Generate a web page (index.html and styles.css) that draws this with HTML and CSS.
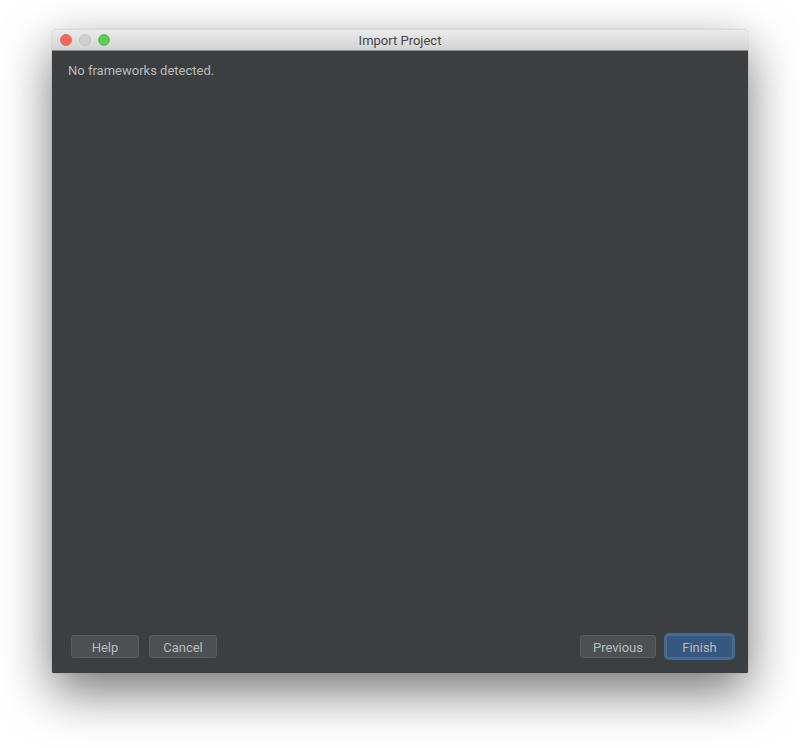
FILE: index.html
```html
<!DOCTYPE html>
<html lang="en">
<head>
<meta charset="utf-8">
<title>Import Project</title>
<link rel="stylesheet" href="styles.css">
</head>
<body>
<main class="window">
  <header class="titlebar">
    <div class="controls">
      <button class="light close" type="button" aria-label="Close"></button>
      <button class="light minimize" type="button" aria-label="Minimize" disabled></button>
      <button class="light expand" type="button" aria-label="Zoom"></button>
    </div>
    <h1 class="title">Import Project</h1>
  </header>
  <section class="content">
    <p class="message">No frameworks detected.</p>
  </section>
  <footer class="actions">
    <button class="button" type="button">Help</button>
    <button class="button" type="button">Cancel</button>
    <span class="spacer"></span>
    <button class="button previous" type="button">Previous</button>
    <button class="button primary" type="button">Finish</button>
  </footer>
</main>
</body>
</html>
```
FILE: styles.css
```css
* {
  box-sizing: border-box;
}

body {
  display: flex;
  min-height: 100vh;
  margin: 0;
  padding: 29px 52px 75px;
  background: #fff;
  font-family: Roboto, "Liberation Sans", sans-serif;
  font-size: 13px;
  line-height: 16px;
}

.window {
  display: flex;
  flex: 1;
  flex-direction: column;
  overflow: hidden;
  border-radius: 5px 5px 1px 1px;
  background: linear-gradient(#ebebeb 20px, #3c3f41 20px);
  box-shadow: 0 0 1px rgba(0, 0, 0, 0.3), 0 19px 50px rgba(0, 0, 0, 0.54);
}

.titlebar {
  display: grid;
  grid-template-columns: 1fr auto 1fr;
  align-items: center;
  height: 22px;
  padding: 0 8px;
  border-top: 1px solid #dcdcdc;
  border-bottom: 1px solid #8c8c8c;
  border-radius: 5px 5px 0 0;
  background: linear-gradient(#ebebeb, #d3d3d3);
}

.controls {
  display: flex;
  gap: 7px;
}

.light {
  width: 12px;
  height: 12px;
  padding: 0;
  border: 1px solid;
  border-radius: 50%;
}

.close {
  border-color: #e9655b;
  background: #f0695f;
}

.minimize {
  border-color: #c2c2c2;
  background: #d0d0d0;
}

.expand {
  border-color: #5fc253;
  background: #62c856;
}

.title {
  margin: 0;
  padding-top: 2px;
  color: #464646;
  font-size: 13px;
  font-weight: 400;
}

.content {
  flex: 1;
  padding: 12px 16px;
}

.message {
  margin: 0;
  color: #bbb;
}

.actions {
  display: flex;
  align-items: center;
  gap: 10px;
  padding: 0 15px 15px 19px;
}

.spacer {
  flex: 1;
}

.button {
  min-width: 68px;
  height: 23px;
  padding: 2px 12px 0;
  border: 1px solid #5a5d5e;
  border-radius: 3px;
  background: #4c5052;
  color: #bbb;
  font: inherit;
}

.primary {
  min-width: 67px;
  border-color: #4c708c;
  background: #365880;
  box-shadow: 0 0 0 2px #43698e;
}
```
